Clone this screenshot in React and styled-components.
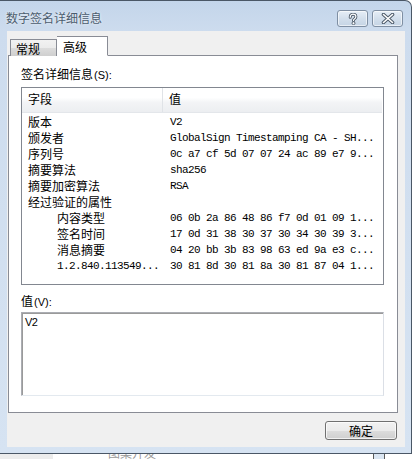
import React from "react";
import styled, { createGlobalStyle } from "styled-components";

const Global = createGlobalStyle`
  html, body { margin: 0; padding: 0; background: #ffffff; }
  body { font-family: "Liberation Sans", "Noto Sans CJK SC", sans-serif; font-size: 12px; color: #000; }
`;

const Screen = styled.div`
  width: 413px;
  height: 459px;
  overflow: hidden;
`;

const Window = styled.div`
  width: 412px;
  height: 454px;
  box-sizing: border-box;
  border-top: 1px solid #4a5766;
  border-right: 1px solid #4a5766;
  border-bottom: 1px solid #4a5766;
  border-top-right-radius: 7px;
  background: linear-gradient(180deg, #c3d5ea 0px, #cddcee 30px, #d6e3f2 100%);
  display: flex;
  flex-direction: column;
  padding: 0 6px 6px 7px;
`;

const TitleBar = styled.div`
  height: 30px;
  display: flex;
  align-items: center;
  margin-left: -1px;
`;

const Title = styled.div`
  flex: 1;
  font-family: "Noto Sans CJK SC", sans-serif;
  font-size: 12px;
  color: #4b5c6e;
  margin-top: 2px;
  text-shadow: 0 0 3px rgba(255, 255, 255, 0.9);
`;

const CapButton = styled.div`
  width: 29px;
  height: 15px;
  border: 1px solid #7f8fa3;
  border-radius: 3px;
  background: linear-gradient(180deg, #e6eef7 0%, #d3dfec 50%, #c5d4e5 100%);
  box-shadow: inset 0 0 0 1px rgba(255, 255, 255, 0.6);
  display: flex;
  align-items: center;
  justify-content: center;
  margin-left: ${(p) => p.$gap || 0}px;
  margin-top: 5px;
  margin-right: ${(p) => p.$right || 0}px;
`;

const Client = styled.div`
  flex: 1;
  background: #f0f0f0;
  display: flex;
  flex-direction: column;
  padding: 5px 0 0 1px;
`;

const TabRow = styled.div`
  display: flex;
  align-items: flex-end;
  height: 20px;
  padding-left: 2px;
  position: relative;
  z-index: 1;
`;

const Tab = styled.div`
  height: ${(p) => (p.$active ? 20 : 17)}px;
  width: ${(p) => p.$w}px;
  box-sizing: border-box;
  border: 1px solid #898c95;
  border-bottom: ${(p) => (p.$active ? "1px solid #fff" : "none")};
  border-left: ${(p) => (p.$noLeft ? "none" : "1px solid #898c95")};
  background: ${(p) =>
    p.$active ? "#ffffff" : "linear-gradient(180deg, #f2f2f2 0%, #ebebeb 50%, #dcdcdc 51%, #cfcfcf 100%)"};
  font-family: "Noto Sans CJK SC", sans-serif;
  font-size: 12px;
  line-height: 15px;
  padding-left: ${(p) => (p.$active ? 6 : 5)}px;
  padding-top: ${(p) => (p.$active ? 2 : 1)}px;
`;

const Panel = styled.div`
  width: 390px;
  height: 358px;
  box-sizing: border-box;
  border: 1px solid #898c95;
  background: #ffffff;
  margin-top: -1px;
  padding: 11px 0 0 12px;
  display: flex;
  flex-direction: column;
`;

const Label = styled.div`
  font-size: 12px;
  line-height: 14px;
  height: 14px;
  margin-top: ${(p) => p.$top || 0}px;
  font-family: "Noto Sans CJK SC", sans-serif;
  span {
    font-family: "Liberation Sans", sans-serif;
    font-size: 11px;
    margin-left: 1px;
  }
`;

const List = styled.div`
  margin-top: 6px;
  width: 363px;
  height: 198px;
  box-sizing: border-box;
  border: 1px solid #828790;
  background: #fff;
`;

const Header = styled.div`
  height: 24px;
  display: flex;
  background: linear-gradient(180deg, #ffffff 0%, #ffffff 40%, #f3f4f6 60%, #eceef1 100%);
  border-bottom: 1px solid #e3e6ea;
  margin-right: 1px;
`;

const HeadCell = styled.div`
  width: ${(p) => p.$w}px;
  box-sizing: border-box;
  padding-left: ${(p) => p.$pad}px;
  border-right: ${(p) => (p.$line ? "1px solid #e0e3e7" : "none")};
  font-family: "Noto Sans CJK SC", sans-serif;
  font-size: 12px;
  line-height: 22px;
  flex: ${(p) => (p.$grow ? 1 : "none")};
`;

const Rows = styled.div`
  padding-top: 1px;
`;

const Row = styled.div`
  display: flex;
  height: 16px;
  align-items: center;
`;

const Field = styled.div`
  width: 141px;
  box-sizing: border-box;
  padding-left: ${(p) => 6 + (p.$indent ? 29 : 0)}px;
  font-family: ${(p) => (p.$mono ? '"Liberation Mono", monospace' : '"Noto Sans CJK SC", sans-serif')};
  font-size: ${(p) => (p.$mono ? 11 : 12)}px;
  letter-spacing: ${(p) => (p.$mono ? "-0.6px" : "0")};
  white-space: nowrap;
  line-height: 16px;
`;

const Value = styled.div`
  flex: 1;
  padding-left: 7px;
  font-family: "Liberation Mono", monospace;
  font-size: 11px;
  letter-spacing: -0.6px;
  white-space: nowrap;
  line-height: 16px;
`;

const ValueBox = styled.div`
  margin-top: 4px;
  width: 363px;
  height: 84px;
  box-sizing: border-box;
  border: 1px solid #abadb3;
  border-right-color: #dbdfe6;
  border-bottom-color: #e3e9ef;
  box-shadow: inset 1px 1px 0 #9a9a9a;
  padding: 3px 0 0 3px;
  font-family: "Liberation Sans", sans-serif;
  font-size: 11px;
  line-height: 12px;
  letter-spacing: -0.5px;
`;

const Footer = styled.div`
  display: flex;
  justify-content: flex-end;
  padding: 8px 8px 0 0;
`;

const Button = styled.div`
  width: 72px;
  height: 19px;
  box-sizing: border-box;
  border: 1px solid #707070;
  border-radius: 3px;
  background: linear-gradient(180deg, #f2f2f2 0%, #ebebeb 50%, #dddddd 51%, #cfcfcf 100%);
  box-shadow: inset 0 0 0 1px rgba(255, 255, 255, 0.7);
  display: flex;
  align-items: center;
  justify-content: center;
  font-family: "Noto Sans CJK SC", sans-serif;
  font-size: 12px;
`;

const Under = styled.div`
  height: 5px;
  display: flex;
  overflow: hidden;
  background: #ffffff;
`;

const UnderPart = styled.div`
  width: ${(p) => p.$w}px;
  background: ${(p) => p.$bg};
  border-right: ${(p) => (p.$line ? "1px solid #5a5a5a" : "none")};
  flex: ${(p) => (p.$grow ? 1 : "none")};
  color: #9a9a9a;
  font-family: "Noto Sans CJK SC", sans-serif;
  font-size: 12px;
  line-height: 12px;
  white-space: nowrap;
  overflow: hidden;
  padding-left: ${(p) => p.$pad || 0}px;
  span { display: block; margin-top: -7px; }
`;

const HelpIcon = () => (
  <svg width="12" height="12" viewBox="0 0 12 12">
    <path
      d="M3.2 4.2 C3.2 2.2 4.5 1.2 6 1.2 C7.8 1.2 8.9 2.3 8.9 3.7 C8.9 5 8 5.6 7.1 6.2 C6.6 6.5 6.5 6.9 6.5 7.6"
      fill="none"
      stroke="#4d5a69"
      strokeWidth="3"
      strokeLinecap="round"
    />
    <path
      d="M3.2 4.2 C3.2 2.2 4.5 1.2 6 1.2 C7.8 1.2 8.9 2.3 8.9 3.7 C8.9 5 8 5.6 7.1 6.2 C6.6 6.5 6.5 6.9 6.5 7.6"
      fill="none"
      stroke="#ffffff"
      strokeWidth="1.2"
      strokeLinecap="round"
    />
    <circle cx="6.5" cy="10.2" r="1.5" fill="#ffffff" stroke="#4d5a69" strokeWidth="0.9" />
  </svg>
);

const CloseIcon = () => (
  <svg width="14" height="11" viewBox="0 0 14 11">
    <path d="M2.5 1.5 L11.5 9.5 M11.5 1.5 L2.5 9.5" stroke="#4d5a69" strokeWidth="3.6" strokeLinecap="round" />
    <path d="M2.5 1.5 L11.5 9.5 M11.5 1.5 L2.5 9.5" stroke="#ffffff" strokeWidth="1.6" strokeLinecap="round" />
  </svg>
);

const rows = [
  { f: "版本", v: "V2" },
  { f: "颁发者", v: "GlobalSign Timestamping CA - SH..." },
  { f: "序列号", v: "0c a7 cf 5d 07 07 24 ac 89 e7 9..." },
  { f: "摘要算法", v: "sha256" },
  { f: "摘要加密算法", v: "RSA" },
  { f: "经过验证的属性", v: "" },
  { f: "内容类型", v: "06 0b 2a 86 48 86 f7 0d 01 09 1...", indent: true },
  { f: "签名时间", v: "17 0d 31 38 30 37 30 34 30 39 3...", indent: true },
  { f: "消息摘要", v: "04 20 bb 3b 83 98 63 ed 9a e3 c...", indent: true },
  { f: "1.2.840.113549...", v: "30 81 8d 30 81 8a 30 81 87 04 1...", indent: true, mono: true },
];

export default function App() {
  return (
    <Screen>
      <Global />
      <Window>
        <TitleBar>
          <Title>数字签名详细信息</Title>
          <CapButton>
            <HelpIcon />
          </CapButton>
          <CapButton $gap={4} $right={2}>
            <CloseIcon />
          </CapButton>
        </TitleBar>
        <Client>
          <TabRow>
            <Tab $w={47}>常规</Tab>
            <Tab $w={51} $active $noLeft>
              高级
            </Tab>
          </TabRow>
          <Panel>
            <Label>
              签名详细信息<span>(S):</span>
            </Label>
            <List>
              <Header>
                <HeadCell $w={141} $pad={6} $line>
                  字段
                </HeadCell>
                <HeadCell $pad={6} $grow>
                  值
                </HeadCell>
              </Header>
              <Rows>
                {rows.map((r) => (
                  <Row key={r.f}>
                    <Field $indent={r.indent} $mono={r.mono}>
                      {r.f}
                    </Field>
                    <Value>{r.v}</Value>
                  </Row>
                ))}
              </Rows>
            </List>
            <Label $top={9}>
              值<span>(V):</span>
            </Label>
            <ValueBox>V2</ValueBox>
          </Panel>
          <Footer>
            <Button>确定</Button>
          </Footer>
        </Client>
      </Window>
      <Under>
        <UnderPart $w={53} $bg="#ececec" />
        <UnderPart $w={265} $bg="#ffffff" $pad={55} $line>
          <span>图案开发</span>
        </UnderPart>
        <UnderPart $w={10} $bg="#dbe6f2" $line />
        <UnderPart $grow $bg="#ffffff" />
      </Under>
    </Screen>
  );
}
